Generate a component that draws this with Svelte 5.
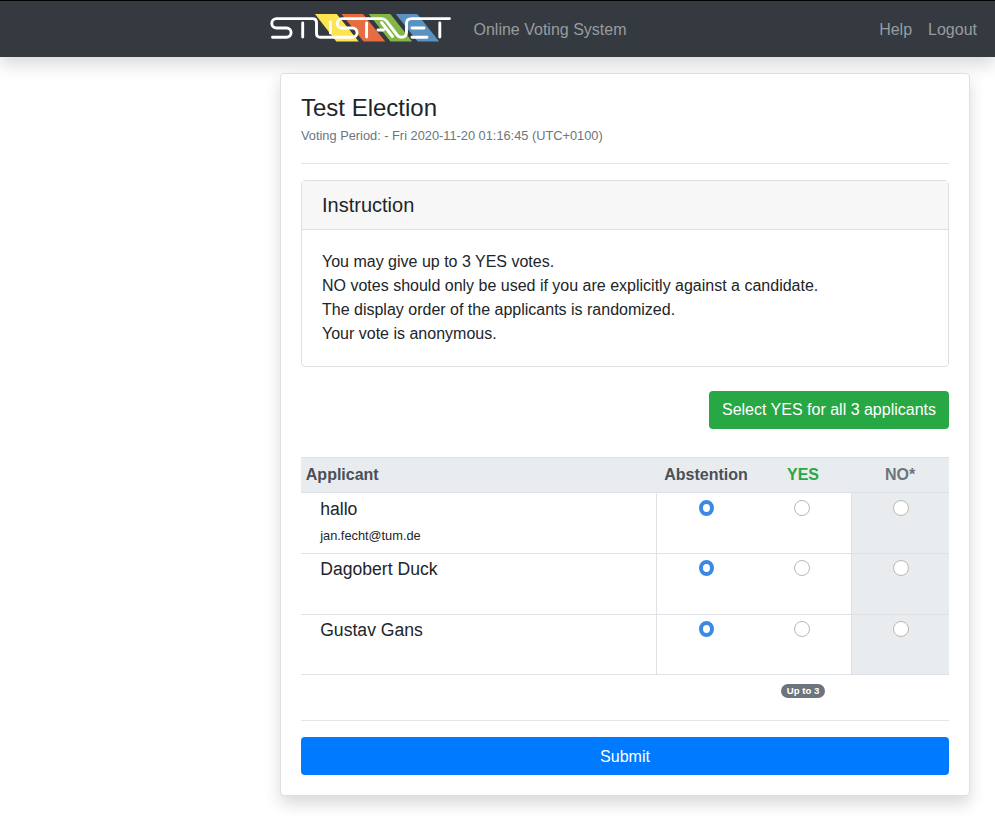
<script>
  const applicants = [
    { name: 'hallo', mail: 'jan.fecht@tum.de' },
    { name: 'Dagobert Duck', mail: '' },
    { name: 'Gustav Gans', mail: '' }
  ];
  const options = ['abstention', 'yes', 'no'];
  let votes = $state(['abstention', 'abstention', 'abstention']);
</script>

<nav>
  <div class="brand">
    <svg width="200" height="56" viewBox="262 0 200 56" role="img" aria-label="StuStaNet">
      <path fill="#fde54f" d="M315 14h21.800l21.900 27.500h-22.400z" />
      <path fill="#e66c42" d="M341.500 14h21.500l22.300 27.500h-21.800z" />
      <path fill="#84b547" d="M368.700 14h21.700l21.800 27.500h-21.800z" />
      <path fill="#5a92c2" d="M395.700 14h21.500l22 27.500h-21.500z" />
      <g fill="none" stroke="#fff" stroke-width="2.900" stroke-linecap="round">
        <path d="M272.500 37.200H286.500a4.600 4.600 0 0 0 0-9.200H276.500a4.700 4.700 0 0 1 0-9.400H312.500q4 0 4 4V33.200q0 4 4 4H352.500a4.600 4.600 0 0 0 0-9.200H342a4.700 4.700 0 0 1 0-9.400H381.500q3 0 4.800 2.200L397.500 35.500q1.500 1.700 4 1.700q5 0 5-5V23.500q0-4.900 5-4.900H449.500" />
        <path d="M302.700 23V37M330.400 22V33M366.600 23V37M439.800 23V37M378 30H383.500M381.500 22.500L392.500 36.500M412 28H424M412 37.200H427" />
      </g>
    </svg>
    <span>Online Voting System</span>
  </div>
  <div class="links"><a href="#help">Help</a><a href="#logout">Logout</a></div>
</nav>

<main>
  <h1>Test Election</h1>
  <small class="period">Voting Period: - Fri 2020-11-20 01:16:45 (UTC+0100)</small>
  <hr />
  <section class="instruction">
    <h2>Instruction</h2>
    <p>
      You may give up to 3 YES votes.<br />
      NO votes should only be used if you are explicitly against a candidate.<br />
      The display order of the applicants is randomized.<br />
      Your vote is anonymous.
    </p>
  </section>
  <div class="actions">
    <button class="all" onclick={() => (votes = ['yes', 'yes', 'yes'])}>Select YES for all 3 applicants</button>
  </div>
  <div class="table">
    <div class="row head">
      <div>Applicant</div>
      <div>Abstention</div>
      <div class="green">YES</div>
      <div class="gray">NO*</div>
    </div>
    {#each applicants as applicant, i}
      <div class="row body" class:first={i === 0} class:final={i === applicants.length - 1}>
        <div class="person">
          <span class="name">{applicant.name}</span>
          <small>{applicant.mail}</small>
        </div>
        {#each options as option}
          <div class="cell {option}">
            <input type="radio" name="vote{i}" value={option} aria-label={option} bind:group={votes[i]} />
          </div>
        {/each}
      </div>
    {/each}
    <div class="row foot">
      <div></div>
      <div></div>
      <div><span class="badge">Up to 3</span></div>
      <div></div>
    </div>
  </div>
  <hr class="last" />
  <button class="submit">Submit</button>
</main>

<style>
  :global(body) {
    margin: 0;
    min-height: 100vh;
    background: #fff;
    color: #212529;
    font: 16px/24px "Liberation Sans", Arial, sans-serif;
  }
  :global(#app) { min-height: 100vh; }
  nav {
    box-sizing: border-box;
    height: 57px;
    border-top: 1px solid #000;
    background: #343a40;
    box-shadow: 0 8px 16px rgba(0, 0, 0, 0.15);
    display: flex;
    justify-content: space-between;
    padding: 0 18px 0 262px;
    color: #999c9f;
  }
  nav svg { display: block; margin-top: -1px; }
  .brand { display: flex; }
  .brand span { margin: 17px 0 0 11.500px; }
  .links { display: flex; gap: 16px; padding-top: 17px; }
  .links a { color: inherit; text-decoration: none; }
  main {
    box-sizing: border-box;
    width: 690px;
    height: 723px;
    margin: 16px 0 0 280px;
    padding: 20px;
    border: 1px solid #dfdfdf;
    border-radius: 4px;
    background: #fff;
    box-shadow: 0 8px 16px rgba(0, 0, 0, 0.15);
  }
  h1 { margin: 0; font-size: 24px; line-height: 28.800px; font-weight: 400; }
  .period { display: block; margin-top: 1px; font-size: 12.800px; line-height: 24px; color: #6c757d; }
  hr { margin: 15px 0 16px; border: 0; border-top: 1px solid #e5e5e5; }
  .instruction { box-sizing: border-box; height: 187px; border: 1px solid #dfdfdf; border-radius: 4px; }
  h2 {
    margin: 0;
    padding: 12px 20px;
    border-bottom: 1px solid #dfdfdf;
    background: #f7f7f7;
    font-size: 20px;
    line-height: 24px;
    font-weight: 400;
  }
  p { margin: 0; padding: 20px; }
  .actions { display: flex; justify-content: flex-end; margin: 24px 0 28px; }
  button {
    height: 38px;
    border: 0;
    border-radius: 4px;
    color: #fff;
    font: inherit;
    line-height: 24px;
  }
  .all { width: 240px; padding: 0; background: #28a745; }
  .row { display: grid; grid-template-columns: 355px 99px 96px 98px; box-sizing: border-box; }
  .head {
    height: 35px;
    border-top: 1px solid #dee2e6;
    background: #e9ecef;
    color: #495057;
    font-weight: 700;
    padding-top: 5px;
    text-align: center;
  }
  .head div:first-child { text-align: left; padding-left: 4.800px; }
  .head div:nth-child(2) { padding-left: 1px; }
  .head .green { color: #28a745; }
  .head .gray { color: #6c757d; }
  .body { height: 61px; border-top: 1px solid #dee2e6; }
  .body.final { height: 60px; }
  .person { padding: 3px 19.200px; display: flex; flex-direction: column; }
  .first .person { padding-top: 4px; }
  .name { font-size: 17.600px; line-height: 24px; }
  .person small { margin-top: 3px; font-size: 12.800px; line-height: 24px; }
  .cell { text-align: center; padding-top: 6px; }
  .first .cell { padding-top: 7px; }
  .yes { padding-right: 2px; }
  .abstention { border-left: 1px solid #dee2e6; }
  .no { border-left: 1px solid #dee2e6; background: #e9ecef; }
  input {
    appearance: none;
    box-sizing: border-box;
    display: block;
    width: 16px;
    height: 16px;
    margin: 0 auto;
    border: 1px solid #bdb7b1;
    border-radius: 50%;
    background: #fff;
  }
  input:checked { width: 15px; border: 4px solid #3c88e5; }
  .foot { height: 46px; border-top: 1px solid #dee2e6; text-align: center; }
  .badge {
    display: block;
    width: 44px;
    height: 14px;
    margin: 9px auto 0;
    border-radius: 7px;
    background: #6c757d;
    color: #fff;
    font-size: 9.600px;
    line-height: 14px;
    font-weight: 700;
  }
  .last { margin: 0 0 16px; }
  .submit { width: 100%; padding: 2px 0 0; background: #007bff; }
</style>
